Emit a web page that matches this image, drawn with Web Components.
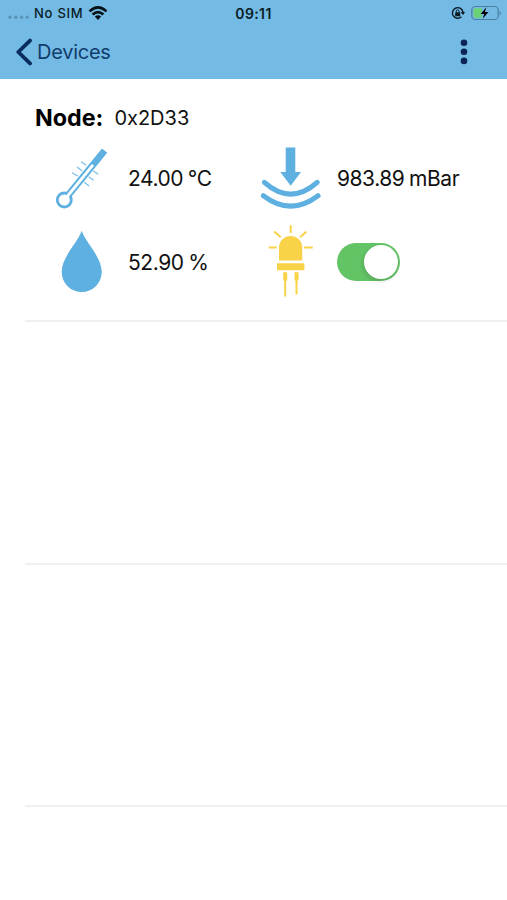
<!DOCTYPE html>
<html lang="en">
<head>
<meta charset="utf-8">
<title>Devices</title>
<style>
body {
  margin: 0;
  background: #fff;
  font-family: Inter, "Liberation Sans", sans-serif;
  color: #111;
}
</style>
</head>
<body>
<devices-screen></devices-screen>

<script>
function makeTemplate(html) {
  const template = document.createElement("template");
  template.innerHTML = html;
  return template;
}

const statusBar = makeTemplate(`
<style>
:host {
  display: grid;
  grid-template-columns: 1fr auto 1fr;
  align-items: center;
  height: 26px;
  color: #0b1c26;
  font-size: 13px;
  font-weight: 500;
}
svg { display: block; }
.left, .right { display: flex; align-items: center; height: 26px; }
.right { justify-content: flex-end; }
.carrier { margin: 0 5px 0 5px; letter-spacing: .75px; }
.time { font-weight: 600; font-size: 14px; letter-spacing: .4px; }
</style>
<div class="left">
  <svg width="29" height="26" fill="#5b93b8">
    <circle cx="10" cy="17.3" r="1.7"/><circle cx="15.8" cy="17.3" r="1.7"/>
    <circle cx="21.6" cy="17.3" r="1.7"/><circle cx="27.2" cy="17.3" r="1.7"/>
  </svg>
  <span class="carrier">No SIM</span>
  <svg width="20" height="26" viewBox="0 0 20 26" fill="none" stroke="#081116" stroke-width="2.6">
    <path d="M1.5 11.4Q10 3.4 18.5 11.4"/>
    <path d="M4.6 14.5Q10 9.6 15.4 14.5"/>
    <path d="M10 20L6.8 16.6Q10 13.8 13.2 16.6Z" fill="#081116" stroke="none"/>
  </svg>
</div>
<span class="time">09:11</span>
<div class="right">
  <svg width="57" height="26" viewBox="450 0 57 26" fill="none">
    <path d="M463 12.2A5.3 5.3 0 1 0 461.4 16.8" stroke="#0b1c26" stroke-width="1.4"/>
    <path d="M460.6 11.9h4.6l-2.2 3z" fill="#0b1c26"/>
    <rect x="455.2" y="12.3" width="5" height="4" rx=".5" fill="#0b1c26"/>
    <path d="M456.3 12.5v-1.2a1.4 1.4 0 0 1 2.8 0v1.2" stroke="#0b1c26"/>
    <rect x="471.8" y="6.5" width="26.4" height="13" rx="3.6" stroke="#4d7f9e" stroke-width="1.2"/>
    <path d="M475.5 8.3H482V17.7H475.5Q473.5 17.7 473.5 15.7V10.3Q473.5 8.3 475.5 8.3Z" fill="#69d277"/>
    <path d="M486.4 7.2L480.6 14H484.2L482.7 18.8L488.5 12H484.9Z" fill="#000" stroke="#73bae5" stroke-width=".8" paint-order="stroke"/>
    <path d="M499.6 11v4.4q1.3-.6 1.3-2.2t-1.3-2.2z" fill="#4d7f9e"/>
  </svg>
</div>`);

class StatusBar extends HTMLElement {
  constructor() {
    super();
    this.attachShadow({ mode: "open" });
    this.shadowRoot.appendChild(statusBar.content.cloneNode(true));
  }
}

const navBar = makeTemplate(`
<style>
:host {
  display: flex;
  align-items: center;
  justify-content: space-between;
  box-sizing: border-box;
  height: 53px;
  padding: 0 38px 1px 15px;
  color: #123c6c;
}
button {
  display: flex;
  align-items: center;
  gap: 4px;
  padding: 0;
  border: 0;
  background: none;
  color: inherit;
  font: inherit;
  font-size: 20px;
  letter-spacing: -.25px;
}
svg { display: block; }
</style>
<button>
  <svg width="18" height="28" viewBox="0 0 18 28" fill="none" stroke="#0a2c5c" stroke-width="3.8">
    <path d="M15 2.6L3.3 14L15 25.4" stroke-linejoin="round" stroke-linecap="round"/>
  </svg>
  <slot></slot>
</button>
<button aria-label="More">
  <svg width="10" height="28" viewBox="0 0 10 28" fill="#0a2556">
    <circle cx="5" cy="4.7" r="3.3"/><circle cx="5" cy="13.7" r="3.3"/><circle cx="5" cy="22.9" r="3.3"/>
  </svg>
</button>`);

class NavBar extends HTMLElement {
  constructor() {
    super();
    this.attachShadow({ mode: "open" });
    this.shadowRoot.appendChild(navBar.content.cloneNode(true));
  }
}

const icons = {
  temperature: `
    <g fill="none" stroke="#5eb0e0">
      <circle cx="29.3" cy="64" r="8.4" fill="#5eb0e0" stroke="none"/>
      <path d="M29.3 64L69.6 14.6" stroke-width="6.8"/>
      <circle cx="29.3" cy="64" r="5.6" fill="#fff" stroke="none"/>
      <path d="M29.3 64L58 28.8" stroke="#fff" stroke-width="2.8"/>
      <path d="M46 25.7l5.3 3.6M42 31l5.3 4M37 36.7l5.7 3.3M58.3 35l5 3.3M53.7 40.7l5 3.6M49.3 46.3l4.7 3.7" stroke-width="1.3" opacity=".8"/>
    </g>`,
  humidity: `
    <path fill="#5eb0e0" d="M46.7 10.8C51 23 66.7 37 66.7 52A20 20 0 0 1 26.7 52C26.7 37 42.4 23 46.7 10.8Z"/>`,
  pressure: `
    <path fill="#5eb0e0" d="M41.7 11.4H51.3V36H57L46.7 49.8L36.3 36H41.7Z"/>
    <g fill="none" stroke="#5eb0e0" stroke-width="5.1" stroke-linecap="round">
      <path d="M20.4 46.4Q46.7 69.8 73.2 46.4"/>
      <path d="M19.4 59.8Q46.7 80.6 74 59.8"/>
    </g>`,
  led: `
    <path fill="#f8d347" d="M35 40.4V27.5A11.6 11.6 0 0 1 58.2 27.5V40.4ZM33 43.2H60.4V50.2H33Z"/>
    <path fill="#f8d347" d="M39.2 52.2h4v8.2h-1v16.2h-2V60.4h-1zM50.5 52.2h4v8.2h-1v14.2h-2V60.4h-1z"/>
    <path fill="none" stroke="#f8d347" stroke-width="2" d="M46.7 5.2V13M30.3 11.4L36.8 17.2M62.4 11.4L56.2 17.2M24.8 27.4H32.7M60.2 27.4H68.8"/>`
};

// icon on the left, slotted value or control on the right
class SensorReading extends HTMLElement {
  constructor() {
    super();
    this.attachShadow({ mode: "open" });
  }

  connectedCallback() {
    this.shadowRoot.innerHTML = `
    <style>
    :host {
      display: flex;
      align-items: center;
      height: 84px;
      font-size: 21px;
      letter-spacing: -.45px;
      word-spacing: -.8px;
      white-space: nowrap;
    }
    svg { flex: none; }
    </style>
    <svg width="93" height="84" viewBox="0 0 93 84">${icons[this.getAttribute("icon")]}</svg>
    <slot></slot>`;
  }
}

const toggle = makeTemplate(`
<style>
:host {
  display: flex;
  align-items: center;
  justify-content: flex-end;
  box-sizing: border-box;
  width: 63px;
  height: 38px;
  margin-bottom: 1px;
  padding: 2px;
  border-radius: 19px;
  background: #63c466;
}
:host(:not([on])) {
  justify-content: flex-start;
  background: #e9e9ea;
}
span {
  width: 34px;
  height: 34px;
  border-radius: 50%;
  background: #fff;
  box-shadow: -1px 2px 5px rgba(0, 0, 0, .15);
}
</style>
<span></span>`);

class ToggleSwitch extends HTMLElement {
  constructor() {
    super();
    this.attachShadow({ mode: "open" });
    this.shadowRoot.appendChild(toggle.content.cloneNode(true));
    this.onclick = () => this.toggleAttribute("on");
  }
}

const nodeCard = makeTemplate(`
<style>
:host {
  display: block;
  box-sizing: border-box;
  height: 241px;
  padding: 19px 0 0 35px;
}
header {
  display: flex;
  align-items: center;
  gap: 11px;
  box-sizing: border-box;
  height: 38px;
  padding-top: 1px;
  font-size: 20px;
}
b { font-size: 23.3px; color: #000; }
.readings {
  display: grid;
  grid-template-columns: 209px 1fr;
}
</style>
<header><b>Node:</b><slot name="address"></slot></header>
<div class="readings"><slot></slot></div>`);

class NodeCard extends HTMLElement {
  constructor() {
    super();
    this.attachShadow({ mode: "open" });
    this.shadowRoot.appendChild(nodeCard.content.cloneNode(true));
  }
}

const screenTemplate = makeTemplate(`
<style>
:host {
  display: flex;
  flex-direction: column;
  height: 900px;
  overflow: hidden;
}
.top { background: #73bae5; }
.line {
  height: 2px;
  margin-left: 25px;
  background: #f0f0f0;
}
.empty { height: 240.5px; }
</style>
<div class="top">
  <status-bar></status-bar>
  <nav-bar>Devices</nav-bar>
</div>
<node-card>
  <span slot="address">0x2D33</span>
  <sensor-reading icon="temperature">24.00 °C</sensor-reading>
  <sensor-reading icon="pressure">983.89 mBar</sensor-reading>
  <sensor-reading icon="humidity">52.90 %</sensor-reading>
  <sensor-reading icon="led"><toggle-switch on></toggle-switch></sensor-reading>
</node-card>
<div class="line"></div>
<div class="empty"></div>
<div class="line"></div>
<div class="empty"></div>
<div class="line"></div>`);

class DevicesScreen extends HTMLElement {
  constructor() {
    super();
    this.attachShadow({ mode: "open" });
    this.shadowRoot.appendChild(screenTemplate.content.cloneNode(true));
  }
}

customElements.define("status-bar", StatusBar);
customElements.define("nav-bar", NavBar);
customElements.define("sensor-reading", SensorReading);
customElements.define("toggle-switch", ToggleSwitch);
customElements.define("node-card", NodeCard);
customElements.define("devices-screen", DevicesScreen);
</script>
</body>
</html>
